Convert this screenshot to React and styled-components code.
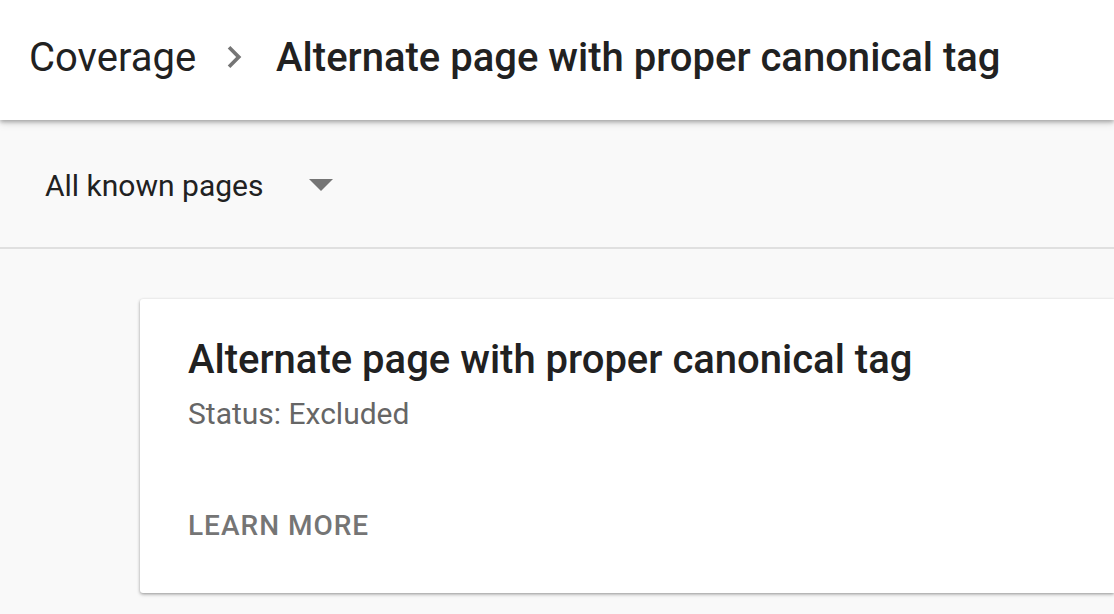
import React from "react";
import styled, { createGlobalStyle } from "styled-components";

const Global = createGlobalStyle`
  html, body { margin: 0; padding: 0; }
  body {
    background: #f9f9f9;
    font-family: Roboto, "Noto Sans", Arial, sans-serif;
    overflow: hidden;
  }
`;

const Page = styled.div`
  width: 1114px;
  height: 614px;
  display: flex;
  flex-direction: column;
  background: #f9f9f9;
  overflow: hidden;
`;

const Header = styled.header`
  height: 120px;
  flex: none;
  box-sizing: border-box;
  background: #fff;
  display: flex;
  align-items: center;
  padding: 0 0 6px 29px;
  box-shadow: 0 2px 4px rgba(0, 0, 0, 0.28), 0 4px 8px rgba(0, 0, 0, 0.1);
  position: relative;
  z-index: 2;
  white-space: nowrap;
`;

const Crumb = styled.span`
  font-size: 40px;
  font-weight: ${(p) => (p.$current ? 500 : 400)};
  color: #212121;
`;

const Sep = styled.span`
  display: flex;
  align-items: center;
  margin: 0 20px 0 16px;
`;

const FilterBar = styled.div`
  height: 129px;
  flex: none;
  display: flex;
  align-items: center;
  padding: 3px 0 0 45px;
  border-bottom: 2px solid #e0e0e0;
  box-sizing: border-box;
`;

const Select = styled.div`
  display: flex;
  align-items: center;
  gap: 46px;
  font-size: 30px;
  color: #212121;
`;

const Content = styled.div`
  flex: 1;
  padding: 50px 0 0 140px;
`;

const Card = styled.section`
  background: #fff;
  height: 294px;
  box-sizing: border-box;
  padding: 36px 48px;
  display: flex;
  flex-direction: column;
  box-shadow: 0 1px 3px rgba(0, 0, 0, 0.3), 0 2px 4px rgba(0, 0, 0, 0.12);
  border-radius: 3px 0 0 3px;
  white-space: nowrap;
`;

const CardTitle = styled.h2`
  margin: 0;
  font-size: 40px;
  font-weight: 500;
  color: #212121;
  line-height: 50px;
`;

const Status = styled.div`
  margin-top: 11px;
  font-size: 30px;
  color: #666;
  line-height: 36px;
`;

const Action = styled.div`
  margin-top: 76px;
  font-size: 28px;
  font-weight: 500;
  letter-spacing: 1px;
  color: #757575;
  line-height: 36px;
`;

export default function App() {
  return (
    <>
      <Global />
      <Page>
        <Header>
          <Crumb>Coverage</Crumb>
          <Sep>
            <svg width="44" height="44" viewBox="0 0 24 24">
              <path d="M8.59 16.59 13.17 12 8.59 7.41 10 6l6 6-6 6z" fill="#757575" />
            </svg>
          </Sep>
          <Crumb $current>Alternate page with proper canonical tag</Crumb>
        </Header>
        <FilterBar>
          <Select>
            <span>All known pages</span>
            <svg width="24" height="12" viewBox="0 0 24 12">
              <path d="M0 0h24L12 12z" fill="#757575" />
            </svg>
          </Select>
        </FilterBar>
        <Content>
          <Card>
            <CardTitle>Alternate page with proper canonical tag</CardTitle>
            <Status>Status: Excluded</Status>
            <Action>LEARN MORE</Action>
          </Card>
        </Content>
      </Page>
    </>
  );
}
